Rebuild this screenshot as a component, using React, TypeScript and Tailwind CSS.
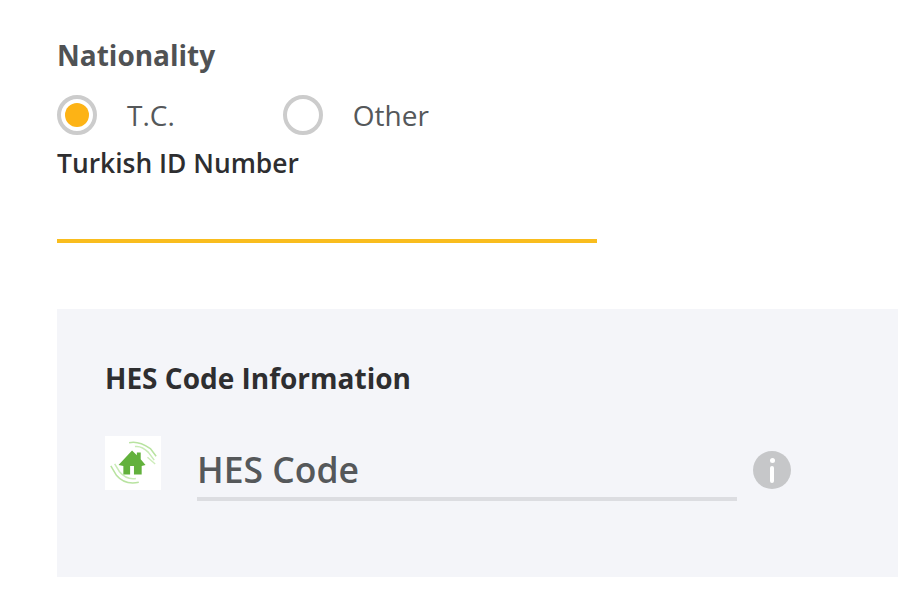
import React from 'react';

const HesIcon = () => (
  <svg viewBox="0 0 56 56" className="w-[56px] h-[54px] mt-px bg-white shrink-0">
    {/* upper hand */}
    <path d="M24 7 C32 5 40 9 46 13 L52 21" fill="none" stroke="#b8e3a0" strokeWidth="1.6" />
    <path d="M30 11 C35 10 40 13 44 17 L50 25" fill="none" stroke="#c9ebb6" strokeWidth="1.6" />
    <path d="M43 22 L51 29" fill="none" stroke="#cdecba" strokeWidth="1.5" />
    {/* lower hand */}
    <path d="M5 31 L11 41 C16 47 24 50 34 48" fill="none" stroke="#b8e3a0" strokeWidth="1.6" />
    <path d="M9 29 L14 37 C19 43 25 45 31 44" fill="none" stroke="#c9ebb6" strokeWidth="1.6" />
    {/* house */}
    <path d="M27 15 L32 20 L32 17 L36 17 L36 24 L41 30 L37 31 L37 40 L29 40 L29 31 L25 31 L25 40 L18 40 L18 31 L13 30 Z" fill="#62b13c" />
  </svg>
);

const Radio = ({ label, checked }: { label: string; checked?: boolean }) => (
  <label className="flex items-center gap-[30px]">
    <span className="flex items-center justify-center w-[40px] h-[40px] rounded-full border-[4px] border-[#cccccc] bg-white">
      {checked && <span className="block w-[24px] h-[24px] rounded-full bg-[#fdb315]" />}
    </span>
    <span className="text-[28px] leading-[40px] text-[#55585a]">{label}</span>
  </label>
);

export default function App() {
  return (
    <div className="w-[898px] h-[608px] overflow-hidden bg-white pl-[57px] pt-[37px] font-['Open_Sans',sans-serif]">
      <div className="text-[28px] leading-[37px] font-bold text-[#505254]">Nationality</div>
      <div className="flex gap-[108px] mt-[21px]">
        <Radio label="T.C." checked />
        <Radio label="Other" />
      </div>
      <div className="text-[26.4px] leading-[36px] font-semibold text-[#2e2e30] mt-[10px]">Turkish ID Number</div>
      <div className="w-[540px] h-[4px] bg-[#f9bd1e] mt-[58px]" />

      <div className="h-[268px] bg-[#f4f5f9] mt-[66px] pl-[48px] pt-[50px]">
        <div className="text-[28px] leading-[38px] font-bold text-[#2e2e30]">HES Code Information</div>
        <div className="flex items-start mt-[38px]">
          <HesIcon />
          <div className="ml-[36px] w-[540px] h-[66px] border-b-[4px] border-[#dcdde1] pt-[10px]">
            <span className="block text-[35.5px] leading-[48px] font-semibold text-[#55585a]">HES Code</span>
          </div>
          <div className="ml-[16px] mt-[16px] w-[38px] h-[38px] rounded-full bg-[#c6c7c9] flex flex-col items-center pt-[7px] gap-[3px]">
            <span className="block w-[5px] h-[5px] rounded-full bg-white" />
            <span className="block w-[4px] h-[17px] rounded-full bg-white" />
          </div>
        </div>
      </div>
    </div>
  );
}
